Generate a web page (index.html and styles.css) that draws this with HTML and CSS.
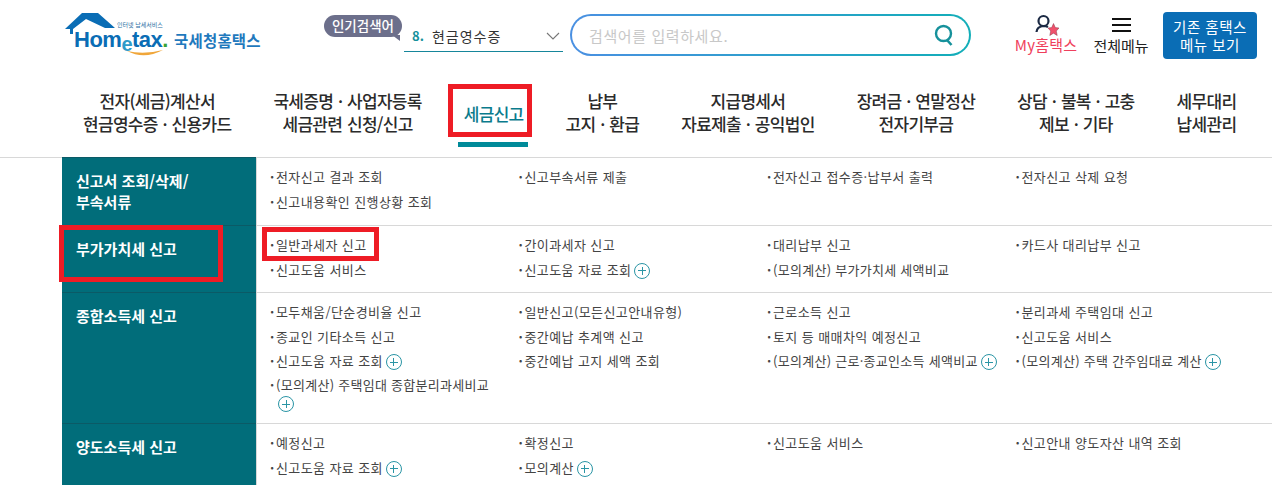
FILE: index.html
```html
<!DOCTYPE html>
<html lang="ko">

<head>
  <meta charset="UTF-8">
  <title>Hometax</title>
  <link rel="stylesheet" href="styles.css">
</head>

<body>
  <header class="top">
    <a class="logo">
      <svg class="logo-house" width="54" height="24" viewBox="0 0 54 24">
        <path d="M1 16 L18 0 L34 0 L51 15 L41 15 L22 6 L9 16 L9 21 L6 21 L6 16 Z" fill="#0a6db5" />
      </svg>
      <span class="logo-small">인터넷 납세서비스</span>
      <span class="logo-en">Hom<i>e</i>tax<b>.</b></span>
      <svg class="logo-smile" width="38" height="8" viewBox="0 0 38 8">
        <path d="M1 1 Q18 10 37 0 Q18 5 1 1 Z" fill="#f0a63a" />
      </svg>
      <span class="logo-ko">국세청홈택스</span>
    </a>

    <div class="hot">
      <span class="hot-badge">인기검색어</span>
      <div class="hot-select">
        <span class="hot-num">8.</span>
        <span class="hot-word">현금영수증</span>
        <svg class="hot-arrow" width="14" height="8" viewBox="0 0 14 8">
          <path d="M1 1 L7 7 L13 1" fill="none" stroke="#777" stroke-width="1.1" />
        </svg>
      </div>
    </div>

    <div class="search">
      <span class="search-text">검색어를 입력하세요.</span>
      <svg width="20" height="22" viewBox="0 0 20 22">
        <circle cx="9.500" cy="9.500" r="7.500" fill="none" stroke="#16919b" stroke-width="2.400" />
        <path d="M13 16 L17.500 21" stroke="#16919b" stroke-width="2.600" />
      </svg>
    </div>

    <a class="tool my">
      <svg width="26" height="24" viewBox="0 0 26 24">
        <circle cx="10.500" cy="9" r="5" fill="none" stroke="#1c2a44" stroke-width="2.200" />
        <path d="M3.500 20 Q4 14.500 10.500 14 Q13 14 15 15" fill="none" stroke="#1c2a44" stroke-width="2.200" />
        <path d="M20.500 11.500 L22.300 15.600 L26 16 L23.300 19 L24.200 23.500 L20.500 21.200 L16.800 23.500 L17.700 19 L15 16 L18.700 15.600 Z" fill="#f0516b" stroke="#8a3a4c" stroke-width=".5" />
      </svg>
      <span>My홈택스</span>
    </a>
    <a class="tool all">
      <span class="burger"><i></i><i></i><i></i></span>
      <span>전체메뉴</span>
    </a>
    <a class="old-btn">기존 홈택스<br>메뉴 보기</a>
  </header>

  <nav class="gnb">
    <a>전자(세금)계산서<br>현금영수증 · 신용카드</a>
    <a>국세증명 · 사업자등록<br>세금관련 신청/신고</a>
    <a class="on">세금신고<span class="mark-nav"></span><span class="under"></span></a>
    <a>납부<br>고지 · 환급</a>
    <a>지급명세서<br>자료제출 · 공익법인</a>
    <a>장려금 · 연말정산<br>전자기부금</a>
    <a>상담 · 불복 · 고충<br>제보 · 기타</a>
    <a>세무대리<br>납세관리</a>
  </nav>

  <main class="menu">
    <section class="row">
      <h3>신고서 조회/삭제/<br>부속서류</h3>
      <ul>
        <li>전자신고 결과 조회</li>
        <li>신고부속서류 제출</li>
        <li>전자신고 접수증·납부서 출력</li>
        <li>전자신고 삭제 요청</li>
        <li>신고내용확인 진행상황 조회</li>
      </ul>
    </section>

    <section class="row">
      <h3>부가가치세 신고<span class="mark-side"></span></h3>
      <ul>
        <li>일반과세자 신고<span class="mark-item"></span></li>
        <li>간이과세자 신고</li>
        <li>대리납부 신고</li>
        <li>카드사 대리납부 신고</li>
        <li>신고도움 서비스</li>
        <li>신고도움 자료 조회<i class="plus"></i></li>
        <li class="calc">(모의계산) 부가가치세 세액비교</li>
      </ul>
    </section>

    <section class="row">
      <h3>종합소득세 신고</h3>
      <ul>
        <li>모두채움/단순경비율 신고</li>
        <li>일반신고(모든신고안내유형)</li>
        <li>근로소득 신고</li>
        <li>분리과세 주택임대 신고</li>
        <li>종교인 기타소득 신고</li>
        <li>중간예납 추계액 신고</li>
        <li>토지 등 매매차익 예정신고</li>
        <li>신고도움 서비스</li>
        <li>신고도움 자료 조회<i class="plus"></i></li>
        <li>중간예납 고지 세액 조회</li>
        <li class="calc">(모의계산) 근로·종교인소득 세액비교<i class="plus"></i></li>
        <li class="calc">(모의계산) 주택 간주임대료 계산<i class="plus"></i></li>
        <li class="calc wrap">(모의계산) 주택임대 종합분리과세비교<i class="plus"></i></li>
      </ul>
    </section>

    <section class="row last">
      <h3>양도소득세 신고</h3>
      <ul>
        <li>예정신고</li>
        <li>확정신고</li>
        <li>신고도움 서비스</li>
        <li>신고안내 양도자산 내역 조회</li>
        <li>신고도움 자료 조회<i class="plus"></i></li>
        <li>모의계산<i class="plus"></i></li>
      </ul>
    </section>
  </main>
</body>

</html>
```

FILE: styles.css
```css
html,
body {
  margin: 0;
  height: 100%;
  overflow: hidden;
}

body {
  background: #FFF;
  color: #333;
  font-family: "Noto Sans CJK KR", "Noto Sans", sans-serif;
}

a {
  text-decoration: none;
  color: inherit;
}

/* top bar */
.top {
  display: flex;
  height: 70px;
}

.logo {
  display: block;
  position: relative;
  width: 258px;
  margin-left: 64px;
  flex: none;
}

.logo-house {
  position: absolute;
  left: 0;
  top: 13px;
}

.logo-small {
  position: absolute;
  left: 53px;
  top: 20px;
  font-size: 6px;
  line-height: 9px;
  color: #2a6f9f;
  white-space: nowrap;
}

.logo-en {
  position: absolute;
  left: 10px;
  top: 31px;
  font: bold 22px/18px "Liberation Sans", sans-serif;
  letter-spacing: -.5px;
  color: #0a6db5;
  white-space: nowrap;
}

.logo-en i {
  font-style: normal;
  font-size: 20px;
  position: relative;
  top: 4px;
  color: #2f9bc9;
}

.logo-en b {
  color: #3aa335;
}

.logo-smile {
  position: absolute;
  left: 62px;
  top: 50px;
}

.logo-ko {
  position: absolute;
  left: 110px;
  top: 30px;
  font-size: 15.500px;
  line-height: 20px;
  font-weight: 700;
  letter-spacing: .2px;
  color: #1f79bd;
  white-space: nowrap;
}

.hot {
  position: relative;
  width: 248px;
  flex: none;
}

.hot-badge {
  position: absolute;
  left: 2px;
  top: 15px;
  width: 78px;
  height: 22px;
  background: #6c6f8b;
  border-radius: 11px;
  color: #FFF;
  font-size: 13.500px;
  line-height: 21px;
  font-weight: 500;
  text-align: center;
}

.hot-badge::after {
  content: "";
  position: absolute;
  right: 2px;
  bottom: -4px;
  border-top: 6px solid #6c6f8b;
  border-left: 8px solid transparent;
}

.hot-select {
  position: absolute;
  left: 82px;
  top: 20px;
  width: 159px;
  height: 31px;
  border-bottom: 1px solid #16869b;
  display: flex;
  align-items: center;
  font-size: 14px;
}

.hot-num {
  color: #16919b;
  font-weight: 700;
  margin: 0 8px 0 8px;
  font-size: 13px;
}

.hot-word {
  flex: 1;
  color: #333;
  letter-spacing: 1px;
}

.hot-arrow {
  margin-right: 3px;
}

.search {
  flex: none;
  width: 401px;
  height: 42px;
  box-sizing: border-box;
  margin: 14px 0 0 0;
  border: 2px solid transparent;
  border-radius: 21px;
  display: flex;
  align-items: center;
  justify-content: space-between;
  padding: 0 15px 0 17px;
  background: linear-gradient(#FFF, #FFF) padding-box, linear-gradient(90deg, #4a90e2, #12aeb8) border-box;
}

.search-text {
  color: #c8c8c8;
  font-size: 15px;
  letter-spacing: .6px;
}

.tool {
  flex: none;
  display: flex;
  flex-direction: column;
  align-items: center;
  font-size: 15px;
  line-height: 18px;
  color: #222;
  white-space: nowrap;
}

.my {
  width: 66px;
  margin-left: 42px;
  padding-top: 12px;
  color: #ef3f5c;
  letter-spacing: .2px;
}

.my svg {
  display: block;
}

.all {
  width: 60px;
  margin-left: 12px;
  padding-top: 18px;
}

.burger {
  display: block;
  width: 19px;
  height: 19px;
}

.burger i {
  display: block;
  height: 2px;
  background: #111;
  margin-bottom: 4px;
}

.old-btn {
  flex: none;
  width: 94px;
  height: 47px;
  margin: 12px 0 0 12px;
  background: #0a6db5;
  border-radius: 4px;
  color: #FFF;
  font-size: 14.500px;
  line-height: 18px;
  text-align: center;
  padding-top: 6px;
  box-sizing: border-box;
  letter-spacing: .5px;
}

/* main nav */
.gnb {
  display: flex;
  gap: 42px;
  height: 88px;
  box-sizing: border-box;
  padding: 19px 0 0 83px;
  border-bottom: 1px solid #d8d8d8;
  font-size: 17px;
  line-height: 23px;
  font-weight: 500;
  letter-spacing: -.7px;
  word-spacing: .7px;
  color: #2b2b2b;
  text-align: center;
  white-space: nowrap;
}

.gnb a {
  display: block;
  position: relative;
}

.gnb .on {
  color: #0a7b8c;
  padding-top: 13px;
}

.under {
  position: absolute;
  left: -6px;
  right: -4px;
  top: 53px;
  height: 5px;
  background: #008a99;
}

.mark-nav {
  position: absolute;
  left: -16px;
  right: -8px;
  top: -5px;
  height: 53px;
  box-sizing: border-box;
  border: 5px solid #ee1c25;
}

/* menu table */
.menu {
  margin-left: 62px;
}

.row {
  display: flex;
}

.row h3 {
  position: relative;
  flex: none;
  box-sizing: border-box;
  width: 194px;
  margin: 0;
  padding: 12px 14px;
  background: #016d7a;
  border-bottom: 1px solid #0b5a66;
  color: #FFF;
  font-size: 15px;
  line-height: 21px;
  font-weight: 700;
}

.row:first-child h3 {
  box-shadow: 0 -1px 0 #0b5a66;
}

.row ul {
  flex: 1;
  list-style: none;
  margin: 0;
  padding: 7px 0 10px 13px;
  border-left: 1px solid #d8d8d8;
  border-bottom: 1px solid #d8d8d8;
  display: grid;
  grid-template-columns: repeat(4, 248.500px);
  align-content: start;
}

.row:first-child ul {
  padding-bottom: 11px;
}

.row.last ul {
  padding-bottom: 20px;
}

.row li {
  position: relative;
  padding-left: 6px;
  font-size: 13px;
  line-height: 24.500px;
  color: #444;
  letter-spacing: .4px;
  white-space: nowrap;
}

.row li.calc {
  letter-spacing: .28px;
}

.row li::before {
  content: "·";
  position: absolute;
  left: 0;
  font-weight: 700;
}

.row li.wrap {
  white-space: normal;
  width: 226px;
  line-height: 18px;
  padding-top: 2.500px;
  padding-bottom: 1px;
}

.plus {
  display: inline-block;
  position: relative;
  width: 16px;
  height: 16px;
  box-sizing: border-box;
  margin-left: 3px;
  border: 1px solid #2a95a5;
  border-radius: 50%;
  vertical-align: -4px;
}

.wrap .plus {
  margin-left: 2px;
}

.plus::before,
.plus::after {
  content: "";
  position: absolute;
  background: #2a95a5;
}

.plus::before {
  left: 3px;
  top: 6.500px;
  width: 8px;
  height: 1px;
}

.plus::after {
  left: 6.500px;
  top: 3px;
  width: 1px;
  height: 8px;
}

.mark-side {
  position: absolute;
  left: -3px;
  top: -1px;
  width: 164px;
  height: 57px;
  box-sizing: border-box;
  border: 5px solid #ee1c25;
}

.mark-item {
  position: absolute;
  left: -8px;
  top: -6px;
  width: 117px;
  height: 34px;
  box-sizing: border-box;
  border: 5px solid #ee1c25;
}
```
